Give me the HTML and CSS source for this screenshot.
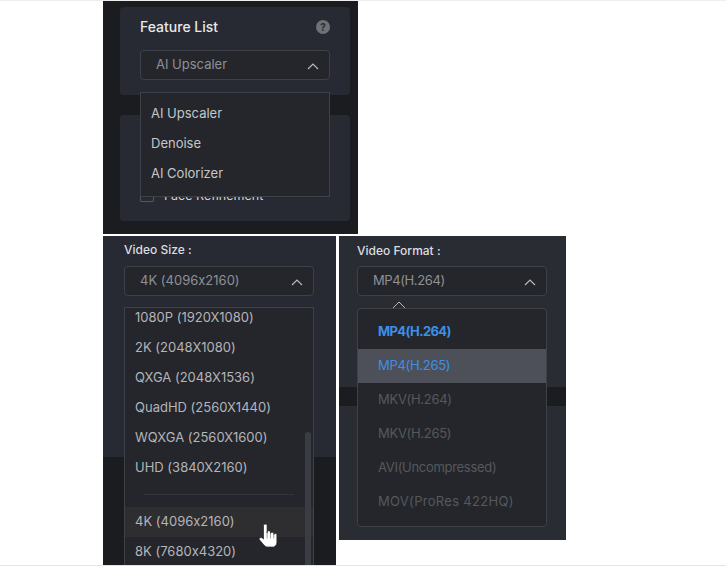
FILE: index.html
```html
<!DOCTYPE html>
<html lang="en">
<head>
    <meta charset="UTF-8">
    <meta name="viewport" content="width=device-width, initial-scale=1.0">
    <title>Dropdown settings</title>
    <link rel="stylesheet" href="styles.css">
</head>
<body>

<div class="page">

    <!-- Feature list panel -->
    <div class="panel panel-feature">
        <div class="card card-feature">
            <div class="card-head">
                <span class="card-title">Feature List</span>
                <span class="help-icon">?</span>
            </div>
            <div class="select">
                <span>AI Upscaler</span>
                <svg class="chevron" viewBox="0 0 12 7"><path d="M1 6 L6 1 L11 6"/></svg>
            </div>
        </div>
        <div class="card card-options">
            <div class="check-row">
                <span class="checkbox"></span>
                <span class="check-label">Face Refinement</span>
            </div>
        </div>
        <ul class="menu menu-feature">
            <li>AI Upscaler</li>
            <li>Denoise</li>
            <li>AI Colorizer</li>
        </ul>
    </div>

    <div class="bottom-row">

        <!-- Video size panel -->
        <div class="panel panel-size">
            <div class="size-top">
                <div class="field-label">Video Size :</div>
                <div class="select">
                    <span>4K (4096x2160)</span>
                    <svg class="chevron" viewBox="0 0 12 7"><path d="M1 6 L6 1 L11 6"/></svg>
                </div>
            </div>
            <div class="menu menu-size">
                <ul class="size-list">
                    <li>1080P (1920X1080)</li>
                    <li>2K (2048X1080)</li>
                    <li>QXGA (2048X1536)</li>
                    <li>QuadHD (2560X1440)</li>
                    <li>WQXGA (2560X1600)</li>
                    <li>UHD (3840X2160)</li>
                </ul>
                <div class="menu-divider"></div>
                <ul class="size-list size-list-lower">
                    <li class="hovered">4K (4096x2160)</li>
                    <li>8K (7680x4320)</li>
                </ul>
                <div class="scrollbar"></div>
            </div>
            <svg class="hand" viewBox="1.5 1.5 14 21.5" preserveAspectRatio="none">
                <path d="M5 11 V3 a1.4 1.4 0 0 1 2.8 0 V10 V9 a1.3 1.3 0 0 1 2.6 0 V10.5 a1.3 1.3 0 0 1 2.6 0 V11.5 a1.2 1.2 0 0 1 2.4 0 V17 C15.8 20 14.5 22.5 13 23 H7.5 C6 22.5 4.5 20 2 16.5 C1 15 2.5 13.5 4 14.5 L5 15.5 Z"/>
                <path class="hand-line" d="M7.8 10 V15 M10.4 10.5 V15 M13 11.5 V15"/>
            </svg>
        </div>

        <!-- Video format panel -->
        <div class="panel panel-format">
            <div class="format-top">
                <div class="field-label">Video Format :</div>
                <div class="select select-format">
                    <span>MP4(H.264)</span>
                    <svg class="chevron" viewBox="0 0 12 7"><path d="M1 6 L6 1 L11 6"/></svg>
                </div>
            </div>
            <div class="format-band"></div>
            <div class="format-bottom"></div>
            <svg class="notch" viewBox="0 0 14 8"><path d="M1 7 L7 1 L13 7"/></svg>
            <ul class="menu menu-format">
                <li class="active">MP4(H.264)</li>
                <li class="current">MP4(H.265)</li>
                <li class="disabled">MKV(H.264)</li>
                <li class="disabled">MKV(H.265)</li>
                <li class="disabled">AVI(Uncompressed)</li>
                <li class="disabled wide">MOV(ProRes 422HQ)</li>
            </ul>
        </div>

    </div>
</div>

</body>
</html>
```

FILE: styles.css
```css
/* Global Styles */
* {
    margin: 0;
    padding: 0;
    box-sizing: border-box;
}

html, body {
    height: 100%;
    overflow: hidden;
}

body {
    font-family: 'Inter', 'Liberation Sans', sans-serif;
    font-feature-settings: "calt" 0;
    background-color: white;
    border-top: 1px solid #eee;
}

ul {
    list-style: none;
}

.page {
    padding-left: 103px;
    height: 565px;
    border-bottom: 1px solid #e4e4e4;
    overflow: hidden;
}

/* Panels */
.panel {
    position: relative;
    background-color: #1b1c20;
}

.panel-feature {
    width: 255px;
    height: 233px;
    padding: 6px 8px 0 17px;
}

.bottom-row {
    display: flex;
    gap: 3px;
    margin-top: 2px;
    align-items: flex-start;
}

.panel-size {
    width: 233px;
    height: 330px;
    overflow: hidden;
}

.panel-format {
    width: 227px;
    height: 304px;
}

/* Cards */
.card {
    background-color: #272a32;
    border-radius: 4px;
}

.card-feature {
    height: 88px;
    padding: 9px 20px 0;
}

.card-head {
    display: flex;
    justify-content: space-between;
    align-items: center;
    height: 20px;
    margin-bottom: 14px;
}

.card-title {
    font-size: 14px;
    font-weight: 500;
    color: #e8e8ea;
}

.help-icon {
    width: 14px;
    height: 14px;
    margin-top: 2px;
    border-radius: 50%;
    background-color: #6f7178;
    color: #2a2c33;
    font-size: 10px;
    font-weight: 700;
    line-height: 14px;
    text-align: center;
}

.card-options {
    height: 106px;
    margin-top: 20px;
    padding: 72px 20px 0;
}

.check-row {
    display: flex;
    gap: 10px;
    align-items: center;
    font-size: 12.5px;
    color: #d4d5d8;
}

.check-label {
    margin-top: 1px;
}

.checkbox {
    width: 14px;
    height: 14px;
    border: 1px solid #55575e;
    border-radius: 1px;
}

/* Select box */
.select {
    display: flex;
    justify-content: space-between;
    align-items: center;
    width: 190px;
    height: 30px;
    padding: 0 10px 2px 15px;
    background-color: #24262b;
    border: 1px solid #3e4148;
    border-radius: 4px;
    font-size: 13px;
    color: #8e9096;
}

.select-format span {
    letter-spacing: -0.4px;
}

.chevron {
    width: 12px;
    height: 7px;
    margin-top: 4px;
    fill: none;
    stroke: #b9babe;
    stroke-width: 1.2;
}

.field-label {
    font-size: 12px;
    font-weight: 500;
    color: #dcdde0;
    margin-bottom: 9px;
}

/* Dropdown menus */
.menu {
    position: absolute;
    width: 190px;
    background-color: #24262b;
    border: 1px solid #3e4148;
    font-size: 13px;
    color: #c6c7ca;
}

.menu-feature {
    left: 37px;
    top: 91px;
    height: 105px;
    padding-top: 5px;
}

.menu-feature li {
    height: 30px;
    line-height: 30px;
    padding-left: 10px;
}

/* Video size */
.size-top {
    height: 221px;
    padding: 6px 21px 0;
    background-color: #272a32;
}

.menu-size {
    left: 21px;
    top: 71px;
    height: 262px;
    overflow: hidden;
}

.menu-size .size-list:first-child {
    margin-top: -6px;
}

.size-list li {
    height: 30px;
    line-height: 30px;
    padding-left: 10px;
    color: #b4b5b9;
}

.size-list-lower li {
    line-height: 28px;
}

.size-list li.hovered {
    background-color: #2e2d2f;
}

.menu-divider {
    height: 1px;
    margin: 12px 19px;
    background-color: #33353b;
}

.scrollbar {
    position: absolute;
    right: 2px;
    top: 124px;
    width: 6px;
    height: 140px;
    border-radius: 3px;
    background-color: #3a3d44;
}

.hand {
    position: absolute;
    left: 156px;
    top: 288px;
    width: 18px;
    height: 23px;
    fill: white;
    stroke: #222;
    stroke-width: 0.6;
}

.hand-line {
    fill: none;
    stroke: #777;
}

/* Video format */
.format-top {
    height: 151px;
    padding: 7px 18px 0;
    background-color: #2a2c34;
}

.format-top .field-label {
    margin-bottom: 8px;
}

.format-band {
    height: 19px;
}

.format-bottom {
    height: 134px;
    background-color: #2a2c34;
}

.notch {
    position: absolute;
    left: 53px;
    top: 65px;
    width: 14px;
    height: 8px;
    fill: none;
    stroke: #b9babe;
    stroke-width: 1;
}

.menu-format {
    left: 18px;
    top: 72px;
    height: 219px;
    padding-top: 6px;
    border-radius: 4px;
}

.menu-format li {
    height: 34px;
    line-height: 33px;
    padding-left: 20px;
    letter-spacing: -0.3px;
}

.menu-format .active {
    color: #3f8fe6;
    font-weight: 700;
    letter-spacing: -0.6px;
}

.menu-format .current {
    color: #3f8fe6;
    background-color: #4d5059;
}

.menu-format .disabled {
    color: #56585e;
}

.menu-format .wide {
    letter-spacing: 0.3px;
}
```
